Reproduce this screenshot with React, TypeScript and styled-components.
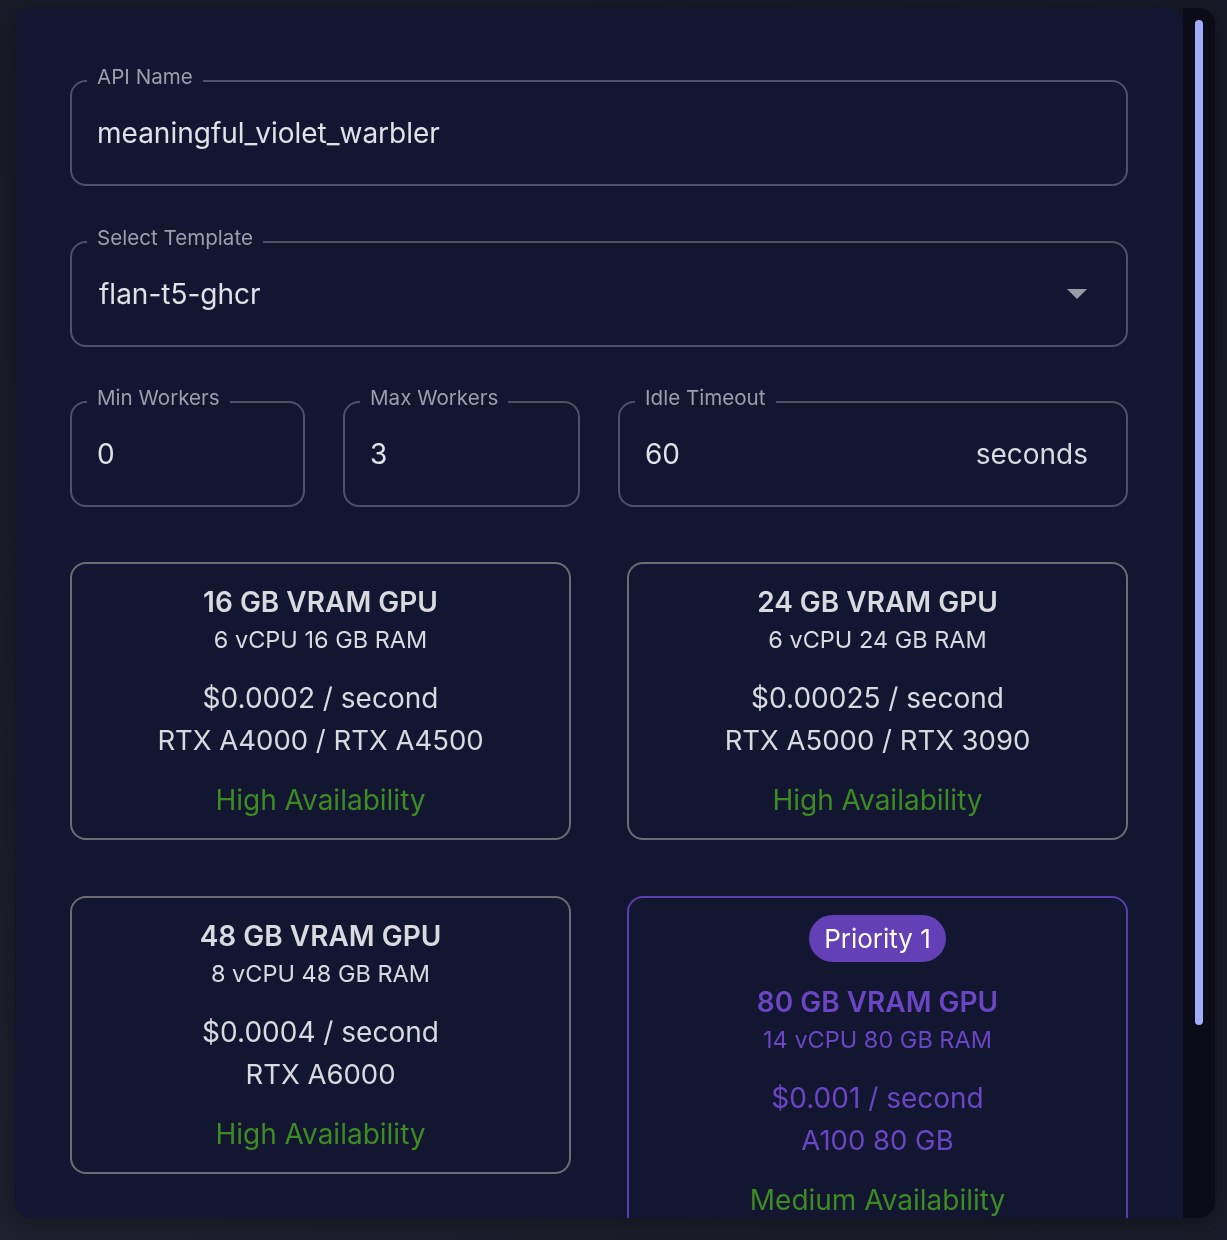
import React from "react";
import styled, { createGlobalStyle } from "styled-components";

const GlobalStyle = createGlobalStyle`
  html, body { margin: 0; padding: 0; }
  body {
    background: #1b1d2c;
    font-family: Inter, "Noto Sans", "Liberation Sans", sans-serif;
    -webkit-font-smoothing: antialiased;
  }
`;

const Page = styled.div`
  width: 1227px;
  height: 1240px;
  box-sizing: border-box;
  padding: 8px 12px 22px 15px;
  background: radial-gradient(circle at 10% 100%, #1f2131 0%, #1b1d2c 40%, #181a29 100%);
  overflow: hidden;
`;

const Modal = styled.div`
  display: flex;
  height: 1210px;
  width: 1200px;
  filter: drop-shadow(0 4px 14px rgba(0, 0, 0, 0.35));
`;

const Panel = styled.div`
  flex: 1;
  background: #131631;
  border-radius: 16px 16px 0 16px;
  overflow: hidden;
  padding: 57px 55px 0 55px;
  box-sizing: border-box;
`;

const Rail = styled.div`
  width: 32px;
  flex: none;
  background: #0b0c17;
  border-radius: 0 16px 16px 0;
  padding: 12px;
  box-sizing: border-box;
`;

const Thumb = styled.div`
  width: 8px;
  height: 1005px;
  border-radius: 4px;
  background: #a2adf9;
`;

const Form = styled.div`
  display: flex;
  flex-direction: column;
  gap: 39.5px;
`;

const Outline = styled.fieldset`
  margin: 0;
  padding: 0 25px 15px 25px;
  border: 2px solid #4f5267;
  border-radius: 16px;
  min-width: 0;
  box-sizing: border-box;
`;

const Legend = styled.legend`
  font-size: 20.6px;
  line-height: 24px;
  padding: 0 10px 8px;
  margin-left: -10px;
  color: #9c9eae;
`;

const ValueRow = styled.div`
  height: 72px;
  display: flex;
  align-items: center;
  justify-content: space-between;
  font-size: 28px;
  color: #e1e2e8;
`;

const Value = styled.span<{ $shift?: number }>`
  margin-left: ${(p) => p.$shift ?? 0}px;
`;

const Adornment = styled.span`
  margin-right: 13px;
  color: #d9dae0;
`;

const Caret = styled.svg`
  width: 20px;
  height: 10px;
  margin-right: 14px;
`;

const FieldRow = styled.div`
  display: grid;
  grid-template-columns: 235px 237px 1fr;
  column-gap: 38px;
`;

const CardGrid = styled.div`
  margin-top: 15px;
  display: grid;
  grid-template-columns: 1fr 1fr;
  column-gap: 56px;
  row-gap: 56px;
  align-items: start;
`;

const Card = styled.div<{ $selected?: boolean }>`
  border: 2px solid ${(p) => (p.$selected ? "#5a3eae" : "#6c6d74")};
  border-radius: 16px;
  padding: 17px 16px 17px;
  display: flex;
  flex-direction: column;
  align-items: center;
  text-align: center;
  color: ${(p) => (p.$selected ? "#6a46c4" : "#d9dae0")};
`;

const Badge = styled.div`
  height: 47px;
  line-height: 47px;
  padding: 0 15px;
  border-radius: 24px;
  background: #6440b6;
  color: #ffffff;
  font-size: 26px;
  margin-bottom: 19px;
`;

const Title = styled.div`
  font-size: 28px;
  font-weight: 600;
  line-height: 42px;
`;

const Sub = styled.div`
  font-size: 23.5px;
  line-height: 34px;
`;

const Price = styled.div`
  font-size: 28px;
  line-height: 42px;
  margin-top: 20px;
`;

const Gpu = styled.div`
  font-size: 27.5px;
  line-height: 42px;
`;

const Availability = styled.div`
  font-size: 28px;
  line-height: 42px;
  margin-top: 18px;
  color: #3d8b22;
`;

type GpuSpec = {
  title: string;
  sub: string;
  price: string;
  gpus: string;
  availability: string;
  priority?: string;
};

const gpus: GpuSpec[] = [
  { title: "16 GB VRAM GPU", sub: "6 vCPU 16 GB RAM", price: "$0.0002 / second", gpus: "RTX A4000 / RTX A4500", availability: "High Availability" },
  { title: "24 GB VRAM GPU", sub: "6 vCPU 24 GB RAM", price: "$0.00025 / second", gpus: "RTX A5000 / RTX 3090", availability: "High Availability" },
  { title: "48 GB VRAM GPU", sub: "8 vCPU 48 GB RAM", price: "$0.0004 / second", gpus: "RTX A6000", availability: "High Availability" },
  { title: "80 GB VRAM GPU", sub: "14 vCPU 80 GB RAM", price: "$0.001 / second", gpus: "A100 80 GB", availability: "Medium Availability", priority: "Priority 1" },
];

function Field({ label, children }: { label: string; children: React.ReactNode }) {
  return (
    <Outline>
      <Legend>{label}</Legend>
      <ValueRow>{children}</ValueRow>
    </Outline>
  );
}

export default function App() {
  return (
    <>
      <GlobalStyle />
      <Page>
        <Modal>
          <Panel>
            <Form>
              <Field label="API Name">
                <Value>meaningful_violet_warbler</Value>
              </Field>
              <Field label="Select Template">
                <Value $shift={2}>flan-t5-ghcr</Value>
                <Caret viewBox="0 0 20 10">
                  <path d="M0 0 L20 0 L10 10 Z" fill="#9a9ba6" />
                </Caret>
              </Field>
              <FieldRow>
                <Field label="Min Workers">
                  <Value>0</Value>
                </Field>
                <Field label="Max Workers">
                  <Value>3</Value>
                </Field>
                <Field label="Idle Timeout">
                  <Value>60</Value>
                  <Adornment>seconds</Adornment>
                </Field>
              </FieldRow>
              <CardGrid>
                {gpus.map((g) => (
                  <Card key={g.title} $selected={!!g.priority}>
                    {g.priority && <Badge>{g.priority}</Badge>}
                    <Title>{g.title}</Title>
                    <Sub>{g.sub}</Sub>
                    <Price>{g.price}</Price>
                    <Gpu>{g.gpus}</Gpu>
                    <Availability>{g.availability}</Availability>
                  </Card>
                ))}
              </CardGrid>
            </Form>
          </Panel>
          <Rail>
            <Thumb />
          </Rail>
        </Modal>
      </Page>
    </>
  );
}
